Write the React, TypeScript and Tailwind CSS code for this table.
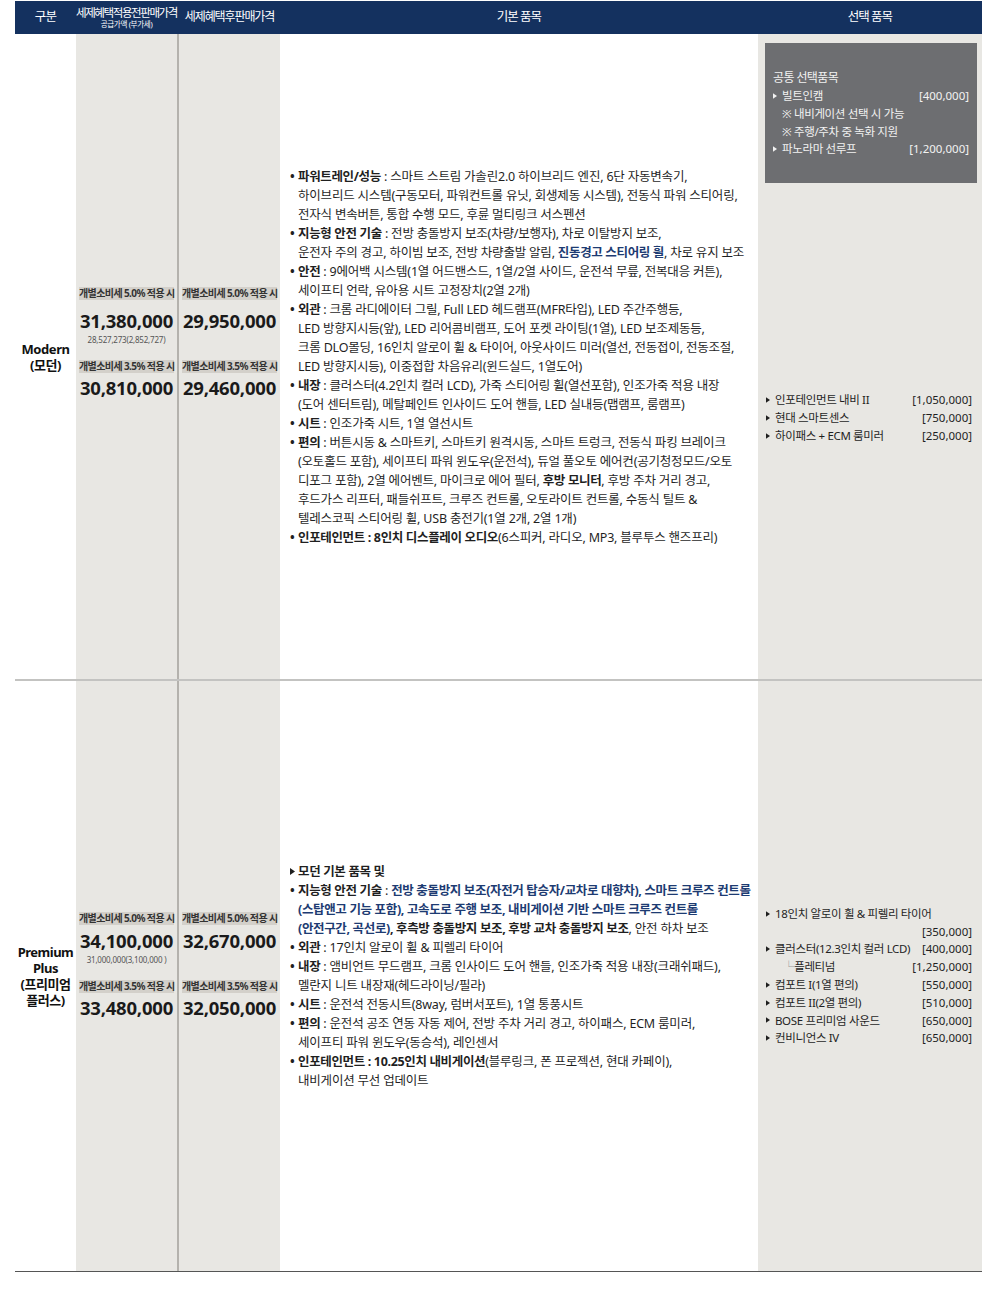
import React from "react";

type Seg = [number, string];
type Item = { mark: "dot" | "tri"; lines: Seg[][] };
type Opt = { label?: string; price?: string; note?: boolean; sub?: boolean; tri?: boolean };

const segClass = ["", "font-bold tracking-[-0.35px]", "font-bold tracking-[-0.35px] text-[#1d3b72]"];

const modernItems: Item[] = [
  {
    mark: "dot",
    lines: [
      [[1, "파워트레인/성능"], [0, " : 스마트 스트림 가솔린2.0 하이브리드 엔진, 6단 자동변속기,"]],
      [[0, "하이브리드 시스템(구동모터, 파워컨트롤 유닛, 회생제동 시스템), 전동식 파워 스티어링,"]],
      [[0, "전자식 변속버튼, 통합 수행 모드, 후륜 멀티링크 서스펜션"]],
    ],
  },
  {
    mark: "dot",
    lines: [
      [[1, "지능형 안전 기술"], [0, " : 전방 충돌방지 보조(차량/보행자), 차로 이탈방지 보조,"]],
      [[0, "운전자 주의 경고, 하이빔 보조, 전방 차량출발 알림, "], [2, "진동경고 스티어링 휠"], [0, ", 차로 유지 보조"]],
    ],
  },
  {
    mark: "dot",
    lines: [
      [[1, "안전"], [0, " : 9에어백 시스템(1열 어드밴스드, 1열/2열 사이드, 운전석 무릎, 전복대응 커튼),"]],
      [[0, "세이프티 언락, 유아용 시트 고정장치(2열 2개)"]],
    ],
  },
  {
    mark: "dot",
    lines: [
      [[1, "외관"], [0, " : 크롬 라디에이터 그릴, Full LED 헤드램프(MFR타입), LED 주간주행등,"]],
      [[0, "LED 방향지시등(앞), LED 리어콤비램프, 도어 포켓 라이팅(1열), LED 보조제동등,"]],
      [[0, "크롬 DLO몰딩, 16인치 알로이 휠 & 타이어, 아웃사이드 미러(열선, 전동접이, 전동조절,"]],
      [[0, "LED 방향지시등), 이중접합 차음유리(윈드실드, 1열도어)"]],
    ],
  },
  {
    mark: "dot",
    lines: [
      [[1, "내장"], [0, " : 클러스터(4.2인치 컬러 LCD), 가죽 스티어링 휠(열선포함), 인조가죽 적용 내장"]],
      [[0, "(도어 센터트림), 메탈페인트 인사이드 도어 핸들, LED 실내등(맵램프, 룸램프)"]],
    ],
  },
  {
    mark: "dot",
    lines: [[[1, "시트"], [0, " : 인조가죽 시트, 1열 열선시트"]]],
  },
  {
    mark: "dot",
    lines: [
      [[1, "편의"], [0, " : 버튼시동 & 스마트키, 스마트키 원격시동, 스마트 트렁크, 전동식 파킹 브레이크"]],
      [[0, "(오토홀드 포함), 세이프티 파워 윈도우(운전석), 듀얼 풀오토 에어컨(공기청정모드/오토"]],
      [[0, "디포그 포함), 2열 에어벤트, 마이크로 에어 필터, "], [1, "후방 모니터"], [0, ", 후방 주차 거리 경고,"]],
      [[0, "후드가스 리프터, 패들쉬프트, 크루즈 컨트롤, 오토라이트 컨트롤, 수동식 틸트 &"]],
      [[0, "텔레스코픽 스티어링 휠, USB 충전기(1열 2개, 2열 1개)"]],
    ],
  },
  {
    mark: "dot",
    lines: [[[1, "인포테인먼트 : 8인치 디스플레이 오디오"], [0, "(6스피커, 라디오, MP3, 블루투스 핸즈프리)"]]],
  },
];

const premiumItems: Item[] = [
  { mark: "tri", lines: [[[1, "모던 기본 품목 및"]]] },
  {
    mark: "dot",
    lines: [
      [[1, "지능형 안전 기술"], [0, " : "], [2, "전방 충돌방지 보조(자전거 탑승자/교차로 대향차), 스마트 크루즈 컨트롤"]],
      [[2, "(스탑앤고 기능 포함), 고속도로 주행 보조, 내비게이션 기반 스마트 크루즈 컨트롤"]],
      [[2, "(안전구간, 곡선로)"], [1, ", 후측방 충돌방지 보조, 후방 교차 충돌방지 보조"], [0, ", 안전 하차 보조"]],
    ],
  },
  { mark: "dot", lines: [[[1, "외관"], [0, " : 17인치 알로이 휠 & 피렐리 타이어"]]] },
  {
    mark: "dot",
    lines: [
      [[1, "내장"], [0, " : 앰비언트 무드램프, 크롬 인사이드 도어 핸들, 인조가죽 적용 내장(크래쉬패드),"]],
      [[0, "멜란지 니트 내장재(헤드라이닝/필라)"]],
    ],
  },
  { mark: "dot", lines: [[[1, "시트"], [0, " : 운전석 전동시트(8way, 럼버서포트), 1열 통풍시트"]]] },
  {
    mark: "dot",
    lines: [
      [[1, "편의"], [0, " : 운전석 공조 연동 자동 제어, 전방 주차 거리 경고, 하이패스, ECM 룸미러,"]],
      [[0, "세이프티 파워 윈도우(동승석), 레인센서"]],
    ],
  },
  {
    mark: "dot",
    lines: [
      [[1, "인포테인먼트 : 10.25인치 내비게이션"], [0, "(블루링크, 폰 프로젝션, 현대 카페이),"]],
      [[0, "내비게이션 무선 업데이트"]],
    ],
  },
];

const commonOpts: Opt[] = [
  { label: "빌트인캠", price: "[400,000]", tri: true },
  { label: "※ 내비게이션 선택 시 가능", note: true },
  { label: "※ 주행/주차 중 녹화 지원", note: true },
  { label: "파노라마 선루프", price: "[1,200,000]", tri: true },
];

const modernOpts: Opt[] = [
  { label: "인포테인먼트 내비 II", price: "[1,050,000]", tri: true },
  { label: "현대 스마트센스", price: "[750,000]", tri: true },
  { label: "하이패스 + ECM 룸미러", price: "[250,000]", tri: true },
];

const premiumOpts: Opt[] = [
  { label: "18인치 알로이 휠 & 피렐리 타이어", tri: true },
  { price: "[350,000]" },
  { label: "클러스터(12.3인치 컬러 LCD)", price: "[400,000]", tri: true },
  { label: "플레티넘", price: "[1,250,000]", sub: true },
  { label: "컴포트 I(1열 편의)", price: "[550,000]", tri: true },
  { label: "컴포트 II(2열 편의)", price: "[510,000]", tri: true },
  { label: "BOSE 프리미엄 사운드", price: "[650,000]", tri: true },
  { label: "컨비니언스 IV", price: "[650,000]", tri: true },
];

function Tri({ className = "" }: { className?: string }) {
  return (
    <svg width="5" height="7" viewBox="0 0 5 7" className={className}>
      <polygon points="0,0 5,3.5 0,7" fill="currentColor" />
    </svg>
  );
}

function Items({ items }: { items: Item[] }) {
  return (
    <div className="flex flex-col text-[12.5px] leading-[19px] tracking-[-0.2px] text-[#1f1f1f]">
      {items.map((it, i) => (
        <div key={i} className="flex">
          <span className="w-[8px] shrink-0 flex items-start">
            {it.mark === "dot" ? (
              <span className="font-bold">•</span>
            ) : (
              <Tri className="mt-[6px]" />
            )}
          </span>
          <div>
            {it.lines.map((ln, j) => (
              <div key={j} className="whitespace-nowrap">
                {ln.map((s, k) => (
                  <span key={k} className={segClass[s[0]]}>
                    {s[1]}
                  </span>
                ))}
              </div>
            ))}
          </div>
        </div>
      ))}
    </div>
  );
}

function OptList({ opts, dark = false }: { opts: Opt[]; dark?: boolean }) {
  return (
    <div className={`flex flex-col text-[11.5px] leading-[17.8px] tracking-[-0.35px] ${dark ? "text-[#f2f2f2]" : "text-[#1f1f1f]"}`}>
      {opts.map((o, i) => (
        <div key={i} className="flex items-center justify-between whitespace-nowrap">
          <span className="flex items-center">
            {o.tri && <Tri className="mr-[5px] w-[4px] h-[6px]" />}
            {o.note && <span className="pl-[9px]">{o.label}</span>}
            {o.sub && (
              <span className="pl-[17px]">
                <span className="text-[#999]">└</span>
                {o.label}
              </span>
            )}
            {!o.note && !o.sub && o.label}
          </span>
          {o.price && <span className="tracking-[0px]">{o.price}</span>}
        </div>
      ))}
    </div>
  );
}

function Badge({ text }: { text: string }) {
  return (
    <div className="w-full h-[13px] bg-[#d3d0ca] text-center text-[10px] leading-[13px] font-bold tracking-[-0.6px] text-[#333] whitespace-nowrap">
      {text}
    </div>
  );
}

function PriceCol({
  p1,
  p2,
  sub,
  pb,
  gap1,
}: {
  p1: string;
  p2: string;
  sub?: string;
  pb: string;
  gap1: string;
}) {
  return (
    <div className={`w-[101px] bg-[#e8e7e3] flex flex-col items-center justify-center px-[3px] ${pb}`}>
      <Badge text="개별소비세 5.0% 적용 시" />
      <div className={`${gap1} text-[18.5px] leading-[24px] font-bold tracking-[-0.2px] text-[#1a1a1a]`}>{p1}</div>
      <div className="mt-[2px] h-[10px] text-[8px] leading-[10px] text-[#555] tracking-[-0.2px]">{sub ?? ""}</div>
      <div className="mt-[15px] w-full">
        <Badge text="개별소비세 3.5% 적용 시" />
      </div>
      <div className="mt-[3px] text-[18.5px] leading-[24px] font-bold tracking-[-0.2px] text-[#1a1a1a]">{p2}</div>
    </div>
  );
}

export default function App() {
  return (
    <div className="w-[997px] min-h-[1293px] bg-white px-[15px] pt-[1px] font-['Noto_Sans','Noto_Sans_CJK_KR',sans-serif]">
      {/* header */}
      <div className="flex h-[33px] bg-[#14315f] text-white">
        <div className="w-[61px] flex items-center justify-center text-[12.5px] tracking-[-0.8px]">구분</div>
        <div className="w-[101px] flex flex-col items-center justify-center">
          <span className="text-[11.5px] leading-[13px] tracking-[-1.4px] whitespace-nowrap">세제혜택적용전판매가격</span>
          <span className="text-[7.5px] leading-[10px] tracking-[-0.3px]">공급가액 (부가세)</span>
        </div>
        <div className="w-[2px]" />
        <div className="w-[101px] flex items-center justify-center text-[12px] tracking-[-1.1px] pb-[1px] whitespace-nowrap">세제혜택후판매가격</div>
        <div className="w-[478px] flex items-center justify-center text-[12.5px] tracking-[-1px]">기본 품목</div>
        <div className="w-[224px] flex items-center justify-center text-[12.5px] tracking-[-1px]">선택 품목</div>
      </div>

      {/* Modern */}
      <div className="flex h-[645px]">
        <div className="w-[61px] flex items-center justify-center text-center text-[13px] leading-[16px] font-bold tracking-[-0.4px] text-[#111]">
          Modern
          <br />
          (모던)
        </div>
        <PriceCol p1="31,380,000" p2="30,810,000" sub="28,527,273(2,852,727)" pb="pb-[27px]" gap1="mt-[9px]" />
        <div className="w-[2px] bg-[#b4b2ad]" />
        <PriceCol p1="29,950,000" p2="29,460,000" pb="pb-[27px]" gap1="mt-[9px]" />
        <div className="w-[478px] flex flex-col justify-center pl-[10px]">
          <Items items={modernItems} />
        </div>
        <div className="w-[224px] bg-[#e8e7e3] flex flex-col">
          <div className="mt-[9px] ml-[7px] mr-[5px] h-[140px] bg-[#6d6e71] flex flex-col justify-center px-[8px]">
            <div className="text-[12px] leading-[19px] tracking-[-0.6px] text-[#f2f2f2]">공통 선택품목</div>
            <OptList opts={commonOpts} dark />
          </div>
          <div className="flex-1 flex flex-col justify-center pl-[8px] pr-[10px] pb-[26px]">
            <OptList opts={modernOpts} />
          </div>
        </div>
      </div>
      <div className="h-[2px] bg-[#c3c3c1]" />

      {/* Premium Plus */}
      <div className="flex h-[590px]">
        <div className="w-[61px] flex items-center justify-center text-center text-[13px] leading-[16px] font-bold tracking-[-0.5px] text-[#111]">
          Premium
          <br />
          Plus
          <br />
          (프리미엄
          <br />
          플러스)
        </div>
        <PriceCol p1="34,100,000" p2="33,480,000" sub="31,000,000(3,100,000 )" pb="pb-[20px]" gap1="mt-[4px]" />
        <div className="w-[2px] bg-[#b4b2ad]" />
        <PriceCol p1="32,670,000" p2="32,050,000" pb="pb-[20px]" gap1="mt-[4px]" />
        <div className="w-[478px] flex flex-col justify-center pl-[10px]">
          <Items items={premiumItems} />
        </div>
        <div className="w-[224px] bg-[#e8e7e3] flex flex-col justify-center pl-[8px] pr-[10px]">
          <OptList opts={premiumOpts} />
        </div>
      </div>
      <div className="h-[1px] bg-[#555]" />
    </div>
  );
}
